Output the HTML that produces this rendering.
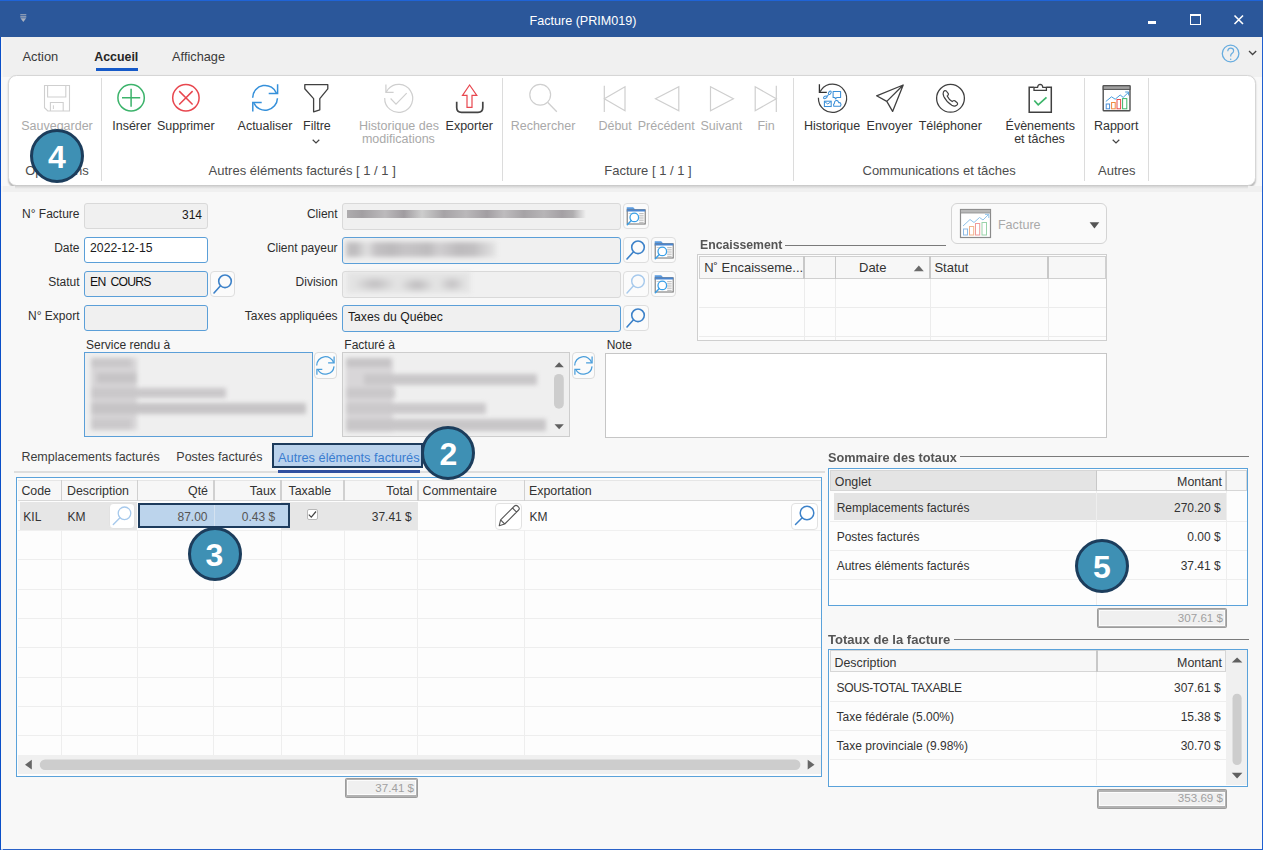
<!DOCTYPE html><html><head><meta charset="utf-8"><style>
html,body{margin:0;padding:0;width:1263px;height:850px;overflow:hidden;background:#f8f8f8;font-family:"Liberation Sans",sans-serif;}
.a{position:absolute;box-sizing:border-box;}
.t{position:absolute;white-space:nowrap;}
svg.a{overflow:visible;}
</style></head><body>
<div class="a" style="left:0px;top:0px;width:1263px;height:37px;background:#2b579a;"></div>
<div class="a" style="left:0px;top:0px;width:1263px;height:1px;background:#1f64d8;"></div>
<div class="t" style="top:14.36px;font-size:12.6px;line-height:15.75px;color:#ffffff;left:433.0px;width:300px;text-align:center;">Facture (PRIM019)</div>
<svg class="a" style="left:0px;top:0px;" width="30" height="30" viewBox="0 0 30 30"><path d="M20.3,14.8 h6 M20.3,16.9 h6" stroke="#a9b1bf" stroke-width="1.1"/><path d="M20.5,18.2 L26.1,18.2 L23.3,21.9 Z" fill="#a9b1bf"/></svg>
<div class="a" style="left:1148px;top:21px;width:8px;height:3px;background:#ffffff;"></div>
<div class="a" style="left:1190px;top:14px;width:11px;height:11px;border:1.5px solid #fff;border-top-width:2px;"></div>
<svg class="a" style="left:1230px;top:10px;" width="20" height="20" viewBox="1230 10 20 20"><path d="M1234.5,15.5 L1243,24 M1243,15.5 L1234.5,24" stroke="#fff" stroke-width="1.6"/></svg>
<div class="a" style="left:0px;top:37px;width:1263px;height:40px;background:#f0f0f0;"></div>
<div class="t" style="top:49.27px;font-size:12.9px;line-height:16.12px;color:#3a3a3a;left:22.4px;">Action</div>
<div class="t" style="top:49.73px;font-size:12.42px;line-height:15.53px;color:#262626;font-weight:bold;left:94.2px;">Accueil</div>
<div class="t" style="top:49.42px;font-size:12.74px;line-height:15.93px;color:#3a3a3a;left:172.1px;">Affichage</div>
<div class="a" style="left:95.5px;top:68px;width:42px;height:3px;background:#1559c8;"></div>
<svg class="a" style="left:1215px;top:40px;" width="48" height="30" viewBox="1215 40 48 30"><circle cx="1230.6" cy="53.5" r="8.3" fill="none" stroke="#67acdf" stroke-width="1.3"/><path d="M1227.8,51.3 q0,-3.2 2.9,-3.2 q2.9,0 2.9,2.7 q0,1.8 -1.6,2.6 q-1.3,0.7 -1.3,2.3 v0.8" fill="none" stroke="#67acdf" stroke-width="1.2"/><circle cx="1230.7" cy="59.3" r="0.75" fill="#67acdf"/><path d="M1249,51 L1252.6,54.5 L1256.2,51" fill="none" stroke="#444" stroke-width="1.3"/></svg>
<div class="a" style="left:8px;top:75px;width:1247.5px;height:110.5px;background:#fff;border:1px solid #d6d6d6;border-radius:8.5px;box-shadow:0 1.3px 1.6px rgba(0,0,0,0.26);"></div>
<div class="a" style="left:101.0px;top:78px;width:1.2px;height:103px;background:#dcdcdc;"></div>
<div class="a" style="left:502.0px;top:78px;width:1.2px;height:103px;background:#dcdcdc;"></div>
<div class="a" style="left:793.0px;top:78px;width:1.2px;height:103px;background:#dcdcdc;"></div>
<div class="a" style="left:1084.0px;top:78px;width:1.2px;height:103px;background:#dcdcdc;"></div>
<div class="a" style="left:1148.0px;top:78px;width:1.2px;height:103px;background:#dcdcdc;"></div>
<div class="t" style="top:119.46px;font-size:12.5px;line-height:15.62px;color:#a9a9a9;left:-3.0px;width:120px;text-align:center;">Sauvegarder</div>
<div class="t" style="top:119.46px;font-size:12.5px;line-height:15.62px;color:#333;left:71.69999999999999px;width:120px;text-align:center;">Insérer</div>
<div class="t" style="top:119.46px;font-size:12.5px;line-height:15.62px;color:#333;left:125.80000000000001px;width:120px;text-align:center;">Supprimer</div>
<div class="t" style="top:119.46px;font-size:12.5px;line-height:15.62px;color:#333;left:205.0px;width:120px;text-align:center;">Actualiser</div>
<div class="t" style="top:119.46px;font-size:12.5px;line-height:15.62px;color:#333;left:256.9px;width:120px;text-align:center;">Filtre</div>
<div class="t" style="top:119.46px;font-size:12.5px;line-height:15.62px;color:#a9a9a9;left:339.0px;width:120px;text-align:center;">Historique des</div>
<div class="t" style="top:132.36px;font-size:12.5px;line-height:15.62px;color:#a9a9a9;left:338.4px;width:120px;text-align:center;">modifications</div>
<div class="t" style="top:119.46px;font-size:12.5px;line-height:15.62px;color:#333;left:409.2px;width:120px;text-align:center;">Exporter</div>
<div class="t" style="top:119.46px;font-size:12.5px;line-height:15.62px;color:#a9a9a9;left:483.0px;width:120px;text-align:center;">Rechercher</div>
<div class="t" style="top:119.46px;font-size:12.5px;line-height:15.62px;color:#a9a9a9;left:555.1px;width:120px;text-align:center;">Début</div>
<div class="t" style="top:119.46px;font-size:12.5px;line-height:15.62px;color:#a9a9a9;left:606.2px;width:120px;text-align:center;">Précédent</div>
<div class="t" style="top:119.46px;font-size:12.5px;line-height:15.62px;color:#a9a9a9;left:661.3px;width:120px;text-align:center;">Suivant</div>
<div class="t" style="top:119.46px;font-size:12.5px;line-height:15.62px;color:#a9a9a9;left:706.1px;width:120px;text-align:center;">Fin</div>
<div class="t" style="top:119.46px;font-size:12.5px;line-height:15.62px;color:#333;left:772.1px;width:120px;text-align:center;">Historique</div>
<div class="t" style="top:119.46px;font-size:12.5px;line-height:15.62px;color:#333;left:829.5px;width:120px;text-align:center;">Envoyer</div>
<div class="t" style="top:119.46px;font-size:12.5px;line-height:15.62px;color:#333;left:890.3px;width:120px;text-align:center;">Téléphoner</div>
<div class="t" style="top:119.46px;font-size:12.5px;line-height:15.62px;color:#333;left:980.3px;width:120px;text-align:center;">Évènements</div>
<div class="t" style="top:132.26px;font-size:12.5px;line-height:15.62px;color:#333;left:979.5px;width:120px;text-align:center;">et tâches</div>
<div class="t" style="top:119.46px;font-size:12.5px;line-height:15.62px;color:#333;left:1056.2px;width:120px;text-align:center;">Rapport</div>
<div class="t" style="top:163.37px;font-size:13px;line-height:16.25px;color:#4d4d4d;left:-23.0px;width:160px;text-align:center;">Opérations</div>
<div class="t" style="top:163.37px;font-size:13px;line-height:16.25px;color:#4d4d4d;left:172.2px;width:260px;text-align:center;">Autres éléments facturés [ 1 / 1 ]</div>
<div class="t" style="top:163.37px;font-size:13px;line-height:16.25px;color:#4d4d4d;left:568.0px;width:160px;text-align:center;">Facture [ 1 / 1 ]</div>
<div class="t" style="top:163.37px;font-size:13px;line-height:16.25px;color:#4d4d4d;left:829.1px;width:220px;text-align:center;">Communications et tâches</div>
<div class="t" style="top:163.37px;font-size:13px;line-height:16.25px;color:#4d4d4d;left:1066.8px;width:100px;text-align:center;">Autres</div>
<svg class="a" style="left:310px;top:136px;" width="12" height="10" viewBox="310 136 12 10"><path d="M312.7,139.8 L316,143 L319.3,139.8" fill="none" stroke="#444" stroke-width="1.2"/></svg>
<svg class="a" style="left:1109.6px;top:136px;" width="12" height="10" viewBox="1109.6 136 12 10"><path d="M1112.3,139.8 L1115.6,143 L1118.8999999999999,139.8" fill="none" stroke="#444" stroke-width="1.2"/></svg>
<svg class="a" style="left:40px;top:82px;" width="34" height="34" viewBox="40 82 34 34"><path d="M44.5,85.5 H69.5 V111 H47.8 L44.5,107.7 Z" fill="none" stroke="#cfcfcf" stroke-width="1.1"/><path d="M47.6,85.5 V97 H65.8 V85.5" fill="none" stroke="#cfcfcf" stroke-width="1.1"/><path d="M50.4,111 V102.5 H63.2 V111" fill="none" stroke="#cfcfcf" stroke-width="1.1"/><path d="M53.4,105.3 V109" stroke="#cfcfcf" stroke-width="1"/></svg>
<svg class="a" style="left:112px;top:80px;" width="40" height="36" viewBox="112 80 40 36"><circle cx="131.1" cy="97.8" r="13.2" fill="none" stroke="#3cb36b" stroke-width="1.5"/><path d="M122,97.8 H140.2 M131.1,88.8 V106.8" stroke="#3cb36b" stroke-width="1.5"/></svg>
<svg class="a" style="left:168px;top:80px;" width="40" height="36" viewBox="168 80 40 36"><circle cx="185.9" cy="97.8" r="13.2" fill="none" stroke="#e8474f" stroke-width="1.5"/><path d="M179.2,91.1 L192.6,104.5 M192.6,91.1 L179.2,104.5" stroke="#e8474f" stroke-width="1.5"/></svg>
<svg class="a" style="left:248px;top:80px;" width="36" height="36" viewBox="248 80 36 36"><path d="M252.67,97.80 A12.4,12.4 0 0 1 276.79,93.76" fill="none" stroke="#3590da" stroke-width="1.5"/><path d="M277.6,84.3 V93.4 H268.7" fill="none" stroke="#3590da" stroke-width="1.5"/><path d="M277.46,98.23 A12.4,12.4 0 0 1 253.83,103.04" fill="none" stroke="#3590da" stroke-width="1.5"/><path d="M252.8,111.4 V102.5 H261.7" fill="none" stroke="#3590da" stroke-width="1.5"/></svg>
<svg class="a" style="left:300px;top:80px;" width="34" height="36" viewBox="300 80 34 36"><path d="M304.8,84.7 H327.8 V88.8 L319.8,98.6 V109.8 L313.6,111.8 V98.6 L304.8,88.8 Z" fill="none" stroke="#404040" stroke-width="1.3" stroke-linejoin="round"/></svg>
<svg class="a" style="left:380px;top:80px;" width="36" height="36" viewBox="380 80 36 36"><path d="M387.98,89.40 A14.0,14.0 0 1 1 384.71,97.91" fill="none" stroke="#cfcfcf" stroke-width="1.2"/><path d="M385.9,84.6 V92.3 H393.6" fill="none" stroke="#cfcfcf" stroke-width="1.25"/><path d="M386.1,92.1 L387.98,89.40" stroke="#cfcfcf" stroke-width="1.2"/><path d="M390.6,98.5 L396,104.1 L406.7,93.2" fill="none" stroke="#cfcfcf" stroke-width="1.2"/></svg>
<svg class="a" style="left:452px;top:80px;" width="36" height="36" viewBox="452 80 36 36"><path d="M469.6,85 L476.8,95.4 H472 V107.4 H467 V95.4 H462.5 Z" fill="none" stroke="#e8474f" stroke-width="1.2" stroke-linejoin="miter"/><path d="M456.7,101.7 V107.5 Q456.7,112.3 461.5,112.3 H478 Q482.8,112.3 482.8,107.5 V101.7" fill="none" stroke="#444" stroke-width="1.7"/></svg>
<svg class="a" style="left:525px;top:80px;" width="36" height="36" viewBox="525 80 36 36"><circle cx="540.2" cy="94.8" r="10.4" fill="none" stroke="#cfcfcf" stroke-width="1.2"/><path d="M547.6,102.3 L556.8,111.8" stroke="#cfcfcf" stroke-width="1.3"/></svg>
<svg class="a" style="left:600px;top:82px;" width="180" height="32" viewBox="600 82 180 32"><path d="M604.3,85.7 V111.9 M625,86.8 V110.8 L604.3,98.8 Z" fill="none" stroke="#cfcfcf" stroke-width="1.2"/><path d="M678.8,86.8 V110.8 L655.5,98.8 Z" fill="none" stroke="#cfcfcf" stroke-width="1.2"/><path d="M710.5,86.8 V110.8 L733.4,98.8 Z" fill="none" stroke="#cfcfcf" stroke-width="1.2"/><path d="M776.3,85.7 V111.9 M755.2,86.8 V110.8 L776.3,98.8 Z" fill="none" stroke="#cfcfcf" stroke-width="1.2"/></svg>
<svg class="a" style="left:812px;top:80px;" width="40" height="36" viewBox="812 80 40 36"><path d="M821.24,89.81 A14.1,14.1 0 1 1 818.41,97.81" fill="none" stroke="#404040" stroke-width="1.25"/><path d="M819.4,84.3 V92.3 H826.8" fill="none" stroke="#303030" stroke-width="1.3"/><path d="M819.6,92.1 L821.6,89.6" stroke="#404040" stroke-width="1.2"/><path d="M833.1,91.4 H840.6 V97.4 H837 L835.4,99 L835,97.4 H833.1 Z" fill="none" stroke="#3a8fd8" stroke-width="1.05" stroke-linejoin="round"/><ellipse cx="825.3" cy="97.3" rx="1.9" ry="1.1" transform="rotate(-25 825.3 97.3)" fill="none" stroke="#3a8fd8" stroke-width="1.05"/><path d="M827,96.5 L828.6,94.5" stroke="#3a8fd8" stroke-width="1.05"/><ellipse cx="829.8" cy="92.8" rx="1.1" ry="1.9" transform="rotate(35 829.8 92.8)" fill="none" stroke="#3a8fd8" stroke-width="1.05"/><rect x="824.4" y="101.2" width="6.8" height="5.3" fill="none" stroke="#3a8fd8" stroke-width="1.05"/><path d="M824.6,101.6 L827.8,104 L831,101.6" fill="none" stroke="#3a8fd8" stroke-width="0.95"/><path d="M833.8,106.2 H840.4 Q841.6,104.6 840.5,103 Q839.6,102.5 838.8,102.7 Q838,100 836,100.4 Q834.3,101 834.4,103.3 Q833,104.2 833.8,106.2 Z" fill="none" stroke="#3a8fd8" stroke-width="1.05"/></svg>
<svg class="a" style="left:872px;top:80px;" width="36" height="36" viewBox="872 80 36 36"><path d="M903.2,85 L876.6,95.8 L886.8,101.4 L892.6,111.4 Z M886.8,101.4 L903.2,85" fill="none" stroke="#404040" stroke-width="1.3" stroke-linejoin="round"/></svg>
<svg class="a" style="left:932px;top:80px;" width="38" height="36" viewBox="932 80 38 36"><circle cx="950.5" cy="98.3" r="13.9" fill="none" stroke="#404040" stroke-width="1.3"/><path d="M943.5,91.8 Q944.8,89.8 946.3,91 L948.3,93.6 Q948.8,94.6 947.8,95.5 L947.2,96 Q948.8,99.5 952.2,101.6 L953,100.9 Q953.9,100.2 954.8,100.8 L957.2,102.8 Q958.2,104 956.6,105.3 Q954.6,106.8 951.8,105.2 Q946.5,102 943.8,96.5 Q942.6,93.6 943.5,91.8 Z" fill="none" stroke="#404040" stroke-width="1.2" stroke-linejoin="round"/></svg>
<svg class="a" style="left:1025px;top:80px;" width="32" height="36" viewBox="1025 80 32 36"><path d="M1033.8,87.3 H1029.2 V112.2 H1051.3 V87.3 H1046.5" fill="none" stroke="#404040" stroke-width="1.5"/><path d="M1034,87.3 V90.4 H1046.4 V87.3 H1042.8 Q1042.5,84.5 1040.2,84.4 Q1037.9,84.5 1037.6,87.3 Z" fill="none" stroke="#404040" stroke-width="1.3"/><path d="M1034.3,100.5 L1038.2,104.9 L1046.5,97.3" fill="none" stroke="#3cb56a" stroke-width="1.7"/></svg>
<svg class="a" style="left:1100px;top:82px;" width="34" height="32" viewBox="1100 82 34 32"><rect x="1103.2" y="85.8" width="26.8" height="25" rx="0.8" fill="#fff" stroke="#505050" stroke-width="1.4"/><rect x="1103.2" y="85.8" width="26.8" height="3.6" fill="#a0a0a0" stroke="#505050" stroke-width="1"/><rect x="1106.2" y="104" width="3.4" height="4.8" fill="none" stroke="#4a90d9" stroke-width="1"/><rect x="1111.6" y="102.5" width="3.6" height="6.3" fill="none" stroke="#f08a3c" stroke-width="1"/><rect x="1117" y="99.5" width="3.6" height="9.3" fill="none" stroke="#e84a4a" stroke-width="1"/><rect x="1122.6" y="98.6" width="4.2" height="10.2" fill="none" stroke="#3cb56a" stroke-width="1"/><path d="M1105.8,101.5 L1111.5,96.8 L1115.2,99.2 L1120.2,95 L1123.2,97.4 L1128.3,92.5" fill="none" stroke="#4a9ddc" stroke-width="1"/><path d="M1125.2,92 H1128.6 V95.4" fill="none" stroke="#4a9ddc" stroke-width="1"/></svg>
<div class="t" style="top:207.14px;font-size:12px;line-height:15.0px;color:#2e2e2e;left:-20.5px;width:100px;text-align:right;">N° Facture</div>
<div class="t" style="top:241.14px;font-size:12px;line-height:15.0px;color:#2e2e2e;left:-20.5px;width:100px;text-align:right;">Date</div>
<div class="t" style="top:275.14px;font-size:12px;line-height:15.0px;color:#2e2e2e;left:-20.5px;width:100px;text-align:right;">Statut</div>
<div class="t" style="top:309.14px;font-size:12px;line-height:15.0px;color:#2e2e2e;left:-20.5px;width:100px;text-align:right;">N° Export</div>
<div class="a" style="left:84.4px;top:203.3px;width:123.5px;height:26px;background:#f0f0f0;border:1px solid #d9d9d9;border-radius:3px;"></div>
<div class="a" style="left:84.4px;top:237.3px;width:123.5px;height:26px;background:#ffffff;border:1.5px solid #5b9fd8;border-radius:3px;"></div>
<div class="a" style="left:84.4px;top:271.3px;width:123.5px;height:26px;background:#f0f0f0;border:1.5px solid #5b9fd8;border-radius:3px;"></div>
<div class="a" style="left:84.4px;top:305.3px;width:123.5px;height:26px;background:#f0f0f0;border:1.5px solid #5b9fd8;border-radius:3px;"></div>
<div class="t" style="top:207.54px;font-size:12px;line-height:15.0px;color:#1a1a1a;left:142px;width:60px;text-align:right;">314</div>
<div class="t" style="top:241.35px;font-size:12.2px;line-height:15.25px;color:#1a1a1a;left:90.1px;">2022-12-15</div>
<div class="t" style="top:275.35px;font-size:12.2px;line-height:15.25px;color:#111;letter-spacing:-0.8px;left:90.1px;word-spacing:2.5px;">EN COURS</div>
<div class="a" style="left:209.5px;top:271.3px;width:25.5px;height:26px;background:#fbfbfb;border:1px solid #dedede;border-radius:4px;"></div>
<svg class="a" style="left:209.5px;top:271.3px;" width="26" height="26" viewBox="209.5 271.3 26 26"><circle cx="224.5" cy="281.6" r="6.3" fill="none" stroke="#3d82c9" stroke-width="1.6"/><path d="M220.0,286.1 L213.5,293.3" stroke="#3d82c9" stroke-width="1.6" stroke-linecap="round"/></svg>
<div class="t" style="top:207.14px;font-size:12px;line-height:15.0px;color:#2e2e2e;left:197.60000000000002px;width:140px;text-align:right;">Client</div>
<div class="t" style="top:241.14px;font-size:12px;line-height:15.0px;color:#2e2e2e;left:197.60000000000002px;width:140px;text-align:right;">Client payeur</div>
<div class="t" style="top:275.14px;font-size:12px;line-height:15.0px;color:#2e2e2e;left:197.60000000000002px;width:140px;text-align:right;">Division</div>
<div class="t" style="top:309.14px;font-size:12px;line-height:15.0px;color:#2e2e2e;left:197.60000000000002px;width:140px;text-align:right;">Taxes appliquées</div>
<div class="a" style="left:342.3px;top:203.3px;width:279px;height:26.3px;background:#f0f0f0;border:1px solid #d9d9d9;border-radius:3px;"></div>
<div class="a" style="left:342.3px;top:237.3px;width:279px;height:26.3px;background:#f0f0f0;border:1.5px solid #5b9fd8;border-radius:3px;"></div>
<div class="a" style="left:342.3px;top:271.3px;width:279px;height:26.3px;background:#f0f0f0;border:1px solid #d9d9d9;border-radius:3px;"></div>
<div class="a" style="left:342.3px;top:305.3px;width:279px;height:26.3px;background:#f0f0f0;border:1.5px solid #5b9fd8;border-radius:3px;"></div>
<div class="a" style="left:346.7px;top:210.1px;width:240px;height:8.4px;filter:blur(0.6px);background:linear-gradient(90deg,#aeacae 0px,#a29fa2 15px,#bcbabc 38px,#a09ca0 57px,#cdcdcd 75px,#a6a3a6 97px,#bab8ba 119px,#a29ea2 140px,#bebcbe 157px,#a6a3a6 177px,#b7b5b7 197px,#a4a0a4 215px,#b0aeb0 226px,#f0f0f0 239px);"></div>
<div class="a" style="left:346px;top:242px;width:150px;height:15px;filter:blur(2.5px);background:linear-gradient(90deg,#c4c2c4 0%,#bdbbbd 6%,#e0e0e0 14%,#c3c1c3 20%,#bcbabc 30%,#c6c4c6 40%,#bebcbe 55%,#d0ced0 62%,#bdbbbd 75%,#c1bfc1 85%,#e4e4e4 100%);"></div>
<div class="a" style="left:347px;top:272px;width:123px;height:21px;filter:blur(2.5px);background:radial-gradient(ellipse 22px 8px at 28px 12px,#bdbbbd,transparent),radial-gradient(ellipse 18px 8px at 70px 13px,#bab8ba,transparent),radial-gradient(ellipse 14px 8px at 105px 12px,#c0bec0,transparent),#e3e3e3;"></div>
<div class="t" style="top:309.55px;font-size:12.2px;line-height:15.25px;color:#1a1a1a;left:348px;">Taxes du Québec</div>
<div class="a" style="left:623.3px;top:203.3px;width:25.5px;height:26px;background:#fbfbfb;border:1px solid #dedede;border-radius:4px;"></div>
<svg class="a" style="left:623.3px;top:203.3px;" width="26" height="26" viewBox="623.3 203.3 26 26"><path d="M627.0,207.60000000000002 h6.5 l2,2.2 h9.6 v2.3 h-18.1 Z" fill="#5a9be0"/><rect x="627.5" y="210.10000000000002" width="18" height="14.2" fill="#fff" stroke="#6e6e6e" stroke-width="1"/><rect x="627.5" y="209.8" width="18" height="2" fill="#4a86d0"/><path d="M639.5,213.8 h4.5" stroke="#b0b0b0" stroke-width="0.8"/><path d="M639.5,215.60000000000002 h4.5" stroke="#b0b0b0" stroke-width="0.8"/><path d="M639.5,217.4 h4.5" stroke="#b0b0b0" stroke-width="0.8"/><path d="M639.5,219.20000000000002 h4.5" stroke="#b0b0b0" stroke-width="0.8"/><path d="M639.5,221.0 h4.5" stroke="#b0b0b0" stroke-width="0.8"/><path d="M639.5,222.8 h4.5" stroke="#b0b0b0" stroke-width="0.8"/><path d="M629.0,213.8 h8" stroke="#c0c0c0" stroke-width="0.8"/><circle cx="634.6" cy="217.70000000000002" r="4.3" fill="#fff" fill-opacity="0.6" stroke="#3aa0e8" stroke-width="1.3"/><path d="M631.6,220.8 L627.6,225.10000000000002" stroke="#3aa0e8" stroke-width="1.4" stroke-linecap="round"/></svg>
<div class="a" style="left:623.3px;top:237.3px;width:25.5px;height:26px;background:#fbfbfb;border:1px solid #dedede;border-radius:4px;"></div>
<svg class="a" style="left:623.3px;top:237.3px;" width="26" height="26" viewBox="623.3 237.3 26 26"><circle cx="638.3" cy="247.60000000000002" r="6.3" fill="none" stroke="#3d82c9" stroke-width="1.6"/><path d="M633.8,252.10000000000002 L627.3,259.3" stroke="#3d82c9" stroke-width="1.6" stroke-linecap="round"/></svg>
<div class="a" style="left:650.8px;top:237.3px;width:25.5px;height:26px;background:#fbfbfb;border:1px solid #dedede;border-radius:4px;"></div>
<svg class="a" style="left:650.8px;top:237.3px;" width="26" height="26" viewBox="650.8 237.3 26 26"><path d="M654.5,241.60000000000002 h6.5 l2,2.2 h9.6 v2.3 h-18.1 Z" fill="#5a9be0"/><rect x="655.0" y="244.10000000000002" width="18" height="14.2" fill="#fff" stroke="#6e6e6e" stroke-width="1"/><rect x="655.0" y="243.8" width="18" height="2" fill="#4a86d0"/><path d="M667.0,247.8 h4.5" stroke="#b0b0b0" stroke-width="0.8"/><path d="M667.0,249.60000000000002 h4.5" stroke="#b0b0b0" stroke-width="0.8"/><path d="M667.0,251.4 h4.5" stroke="#b0b0b0" stroke-width="0.8"/><path d="M667.0,253.20000000000002 h4.5" stroke="#b0b0b0" stroke-width="0.8"/><path d="M667.0,255.0 h4.5" stroke="#b0b0b0" stroke-width="0.8"/><path d="M667.0,256.8 h4.5" stroke="#b0b0b0" stroke-width="0.8"/><path d="M656.5,247.8 h8" stroke="#c0c0c0" stroke-width="0.8"/><circle cx="662.1" cy="251.70000000000002" r="4.3" fill="#fff" fill-opacity="0.6" stroke="#3aa0e8" stroke-width="1.3"/><path d="M659.1,254.8 L655.1,259.1" stroke="#3aa0e8" stroke-width="1.4" stroke-linecap="round"/></svg>
<div class="a" style="left:623.3px;top:271.3px;width:25.5px;height:26px;background:#fbfbfb;border:1px solid #dedede;border-radius:4px;"></div>
<svg class="a" style="left:623.3px;top:271.3px;" width="26" height="26" viewBox="623.3 271.3 26 26"><circle cx="638.3" cy="281.6" r="6.3" fill="none" stroke="#a6c9ec" stroke-width="1.4"/><path d="M633.8,286.1 L627.3,293.3" stroke="#a6c9ec" stroke-width="1.4" stroke-linecap="round"/></svg>
<div class="a" style="left:650.8px;top:271.3px;width:25.5px;height:26px;background:#fbfbfb;border:1px solid #dedede;border-radius:4px;"></div>
<svg class="a" style="left:650.8px;top:271.3px;" width="26" height="26" viewBox="650.8 271.3 26 26"><path d="M654.5,275.6 h6.5 l2,2.2 h9.6 v2.3 h-18.1 Z" fill="#5a9be0"/><rect x="655.0" y="278.1" width="18" height="14.2" fill="#fff" stroke="#6e6e6e" stroke-width="1"/><rect x="655.0" y="277.8" width="18" height="2" fill="#4a86d0"/><path d="M667.0,281.8 h4.5" stroke="#b0b0b0" stroke-width="0.8"/><path d="M667.0,283.6 h4.5" stroke="#b0b0b0" stroke-width="0.8"/><path d="M667.0,285.40000000000003 h4.5" stroke="#b0b0b0" stroke-width="0.8"/><path d="M667.0,287.2 h4.5" stroke="#b0b0b0" stroke-width="0.8"/><path d="M667.0,289.0 h4.5" stroke="#b0b0b0" stroke-width="0.8"/><path d="M667.0,290.8 h4.5" stroke="#b0b0b0" stroke-width="0.8"/><path d="M656.5,281.8 h8" stroke="#c0c0c0" stroke-width="0.8"/><circle cx="662.1" cy="285.7" r="4.3" fill="#fff" fill-opacity="0.6" stroke="#3aa0e8" stroke-width="1.3"/><path d="M659.1,288.8 L655.1,293.1" stroke="#3aa0e8" stroke-width="1.4" stroke-linecap="round"/></svg>
<div class="a" style="left:623.3px;top:305.3px;width:25.5px;height:26px;background:#fbfbfb;border:1px solid #dedede;border-radius:4px;"></div>
<svg class="a" style="left:623.3px;top:305.3px;" width="26" height="26" viewBox="623.3 305.3 26 26"><circle cx="638.3" cy="315.6" r="6.3" fill="none" stroke="#3d82c9" stroke-width="1.6"/><path d="M633.8,320.1 L627.3,327.3" stroke="#3d82c9" stroke-width="1.6" stroke-linecap="round"/></svg>
<div class="a" style="left:950.6px;top:202.9px;width:156.2px;height:41.5px;background:#fafafa;border:1px solid #d4d4d4;border-radius:6px;"></div>
<svg class="a" style="left:958px;top:207px;" width="36" height="34" viewBox="958 207 36 34"><rect x="960.5" y="209.5" width="30" height="28" fill="#fff" stroke="#8a8a8a" stroke-width="1.2"/><rect x="960.5" y="209.5" width="30" height="3.5" fill="#b9b9b9" stroke="#8a8a8a" stroke-width="0.8"/><rect x="963.5" y="229" width="4" height="6" fill="none" stroke="#8fbbe6" stroke-width="1"/><rect x="969.5" y="226.5" width="4.2" height="8.5" fill="none" stroke="#f4b38a" stroke-width="1"/><rect x="975.5" y="223.5" width="4.2" height="11.5" fill="none" stroke="#ef9a9a" stroke-width="1"/><rect x="982" y="222.5" width="4.5" height="12.5" fill="none" stroke="#9ad3aa" stroke-width="1"/><path d="M963,226 L970,219.5 L974,222.5 L979.5,217.5 L983,220 L988.5,214.5" fill="none" stroke="#8fc2ea" stroke-width="1"/><path d="M985,214.3 H988.8 V218" fill="none" stroke="#8fc2ea" stroke-width="1"/></svg>
<div class="t" style="top:217.96px;font-size:12.6px;line-height:15.75px;color:#a9a9a9;left:997.9px;">Facture</div>
<svg class="a" style="left:1086px;top:218px;" width="16" height="14" viewBox="1086 218 16 14"><path d="M1089.6,222.3 H1099.3 L1094.45,228.5 Z" fill="#555"/></svg>
<div class="t" style="top:238.44px;font-size:12px;line-height:15.0px;color:#555;font-weight:bold;left:699.5px;transform:scaleX(1.02);transform-origin:0 0;">Encaissement</div>
<div class="a" style="left:785px;top:244.6px;width:160.5px;height:1.2px;background:#7a7a7a;"></div>
<div class="a" style="left:697.3px;top:254.2px;width:409.5px;height:86.5px;background:#fdfdfd;border:1px solid #cfcfcf;"></div>
<div class="a" style="left:699px;top:256.3px;width:407px;height:22.5px;background:#f7f7f7;border:1px solid #d0d0d0;"></div>
<div class="a" style="left:803.1999999999999px;top:256.3px;width:1.6px;height:22.5px;background:#c8c8c8;"></div>
<div class="a" style="left:834.6px;top:256.3px;width:1.6px;height:22.5px;background:#c8c8c8;"></div>
<div class="a" style="left:929.0px;top:256.3px;width:1.6px;height:22.5px;background:#c8c8c8;"></div>
<div class="a" style="left:1047.0px;top:256.3px;width:1.6px;height:22.5px;background:#c8c8c8;"></div>
<div class="a" style="left:804.0px;top:278.8px;width:1px;height:61px;background:#ececec;"></div>
<div class="a" style="left:835.2px;top:278.8px;width:1px;height:61px;background:#ececec;"></div>
<div class="a" style="left:929.8px;top:278.8px;width:1px;height:61px;background:#ececec;"></div>
<div class="a" style="left:1047.7px;top:278.8px;width:1px;height:61px;background:#ececec;"></div>
<div class="a" style="left:698.5px;top:306.9px;width:407px;height:1px;background:#ececec;"></div>
<div class="a" style="left:698.5px;top:336.0px;width:407px;height:1px;background:#ececec;"></div>
<div class="t" style="top:260.27px;font-size:13px;line-height:16.25px;color:#333;left:704.2px;">N˚ Encaisseme...</div>
<div class="t" style="top:260.27px;font-size:13px;line-height:16.25px;color:#333;left:859px;">Date</div>
<div class="t" style="top:260.27px;font-size:13px;line-height:16.25px;color:#333;left:934.4px;">Statut</div>
<svg class="a" style="left:910px;top:262px;" width="16" height="12" viewBox="910 262 16 12"><path d="M913.8,271.2 H923.8 L918.8,265.5 Z" fill="#6a6a6a"/></svg>
<div class="t" style="top:338.34px;font-size:12px;line-height:15.0px;color:#2e2e2e;left:86.1px;">Service rendu à</div>
<div class="t" style="top:338.34px;font-size:12px;line-height:15.0px;color:#2e2e2e;left:344.3px;">Facturé à</div>
<div class="t" style="top:338.34px;font-size:12px;line-height:15.0px;color:#2e2e2e;left:606.7px;">Note</div>
<div class="a" style="left:84.2px;top:352.4px;width:228.4px;height:84.5px;background:#efefef;border:1.5px solid #5b9fd8;"></div>
<div class="a" style="left:342.3px;top:352.2px;width:228.2px;height:84.9px;background:#efefef;border:1px solid #cdcdcd;"></div>
<div class="a" style="left:605px;top:352.5px;width:502px;height:85.1px;background:#ffffff;border:1.5px solid #c6c6c6;"></div>
<div class="a" style="left:84px;top:352px;width:240px;height:90px;filter:blur(2.2px);"><div class="a" style="left:7px;top:6px;width:46px;height:72px;background:#d6d4d6;"></div><div class="a" style="left:7px;top:6px;width:40px;height:9px;background:#c9c7c9;"></div><div class="a" style="left:13px;top:21px;width:40px;height:10px;background:#c6c4c6;"></div><div class="a" style="left:7px;top:36px;width:135px;height:10px;background:#cac8ca;"></div><div class="a" style="left:7px;top:51px;width:215px;height:11px;background:#c6c4c6;"></div><div class="a" style="left:7px;top:67px;width:40px;height:11px;background:#cbc9cb;"></div></div>
<div class="a" style="left:342px;top:352px;width:240px;height:90px;filter:blur(2.2px);"><div class="a" style="left:4px;top:6px;width:47px;height:74px;background:#d8d6d8;"></div><div class="a" style="left:4px;top:6px;width:45px;height:9px;background:#c6c4c6;"></div><div class="a" style="left:22px;top:22px;width:173px;height:11px;background:#c9c7c9;"></div><div class="a" style="left:4px;top:36px;width:49px;height:10px;background:#cac8ca;"></div><div class="a" style="left:4px;top:51px;width:140px;height:11px;background:#cbc9cb;"></div><div class="a" style="left:4px;top:67px;width:200px;height:12px;background:#c8c6c8;"></div></div>
<svg class="a" style="left:550px;top:356px;" width="20" height="80" viewBox="550 356 20 80"><path d="M554.5,367.3 H563.8 L559.15,362.2 Z" fill="#606060"/><path d="M554.5,424.2 H563.8 L559.15,429.3 Z" fill="#606060"/><rect x="554" y="373.9" width="9.8" height="34.8" rx="4.9" fill="#cdcdcd"/></svg>
<div class="a" style="left:314.3px;top:352.4px;width:22.8px;height:26.2px;background:#fbfbfb;border:1.2px solid #dcdcdc;border-radius:4px;"></div>
<svg class="a" style="left:314.3px;top:352.4px;" width="24" height="26" viewBox="314.3 352.4 24 26"><path d="M317.00,365.80 A8.7,8.7 0 0 1 334.02,363.26" fill="none" stroke="#4a9edb" stroke-width="1.25"/><path d="M334.40,356.90 V363.20 H328.40" fill="none" stroke="#4a9edb" stroke-width="1.25"/><path d="M334.35,366.71 A8.7,8.7 0 0 1 318.17,370.15" fill="none" stroke="#4a9edb" stroke-width="1.25"/><path d="M317.20,375.20 V369.70 H322.60" fill="none" stroke="#4a9edb" stroke-width="1.25"/></svg>
<div class="a" style="left:572.3px;top:352.4px;width:22.8px;height:26.2px;background:#fbfbfb;border:1.2px solid #dcdcdc;border-radius:4px;"></div>
<svg class="a" style="left:572.3px;top:352.4px;" width="24" height="26" viewBox="572.3 352.4 24 26"><path d="M575.00,365.80 A8.7,8.7 0 0 1 592.02,363.26" fill="none" stroke="#4a9edb" stroke-width="1.25"/><path d="M592.40,356.90 V363.20 H586.40" fill="none" stroke="#4a9edb" stroke-width="1.25"/><path d="M592.35,366.71 A8.7,8.7 0 0 1 576.17,370.15" fill="none" stroke="#4a9edb" stroke-width="1.25"/><path d="M575.20,375.20 V369.70 H580.60" fill="none" stroke="#4a9edb" stroke-width="1.25"/></svg>
<div class="a" style="left:0px;top:186px;width:1263px;height:6px;background:#f0f0f0;"></div>
<div class="a" style="left:15px;top:185.2px;width:1233px;height:3.6px;background:linear-gradient(#c4c4c4,#dcdcdc 45%,#f0f0f0);"></div>
<div class="t" style="top:450.26px;font-size:12.5px;line-height:15.62px;color:#3c3c3c;left:21.4px;">Remplacements facturés</div>
<div class="t" style="top:450.26px;font-size:12.5px;line-height:15.62px;color:#3c3c3c;left:176.3px;">Postes facturés</div>
<div class="a" style="left:13.5px;top:471px;width:811px;height:2px;background:#dedede;"></div>
<div class="a" style="left:272.4px;top:442.5px;width:150.5px;height:25px;background:#bad2ec;border:2px solid #1d3b5c;"></div>
<div class="t" style="top:449.96px;font-size:12.8px;line-height:16.0px;color:#3a7dd0;left:278px;">Autres éléments facturés</div>
<div class="a" style="left:278px;top:470.2px;width:142px;height:3px;background:#2f4fa0;"></div>
<div class="a" style="left:16.2px;top:477.2px;width:805.8px;height:299.6px;background:#fdfdfd;border:1.5px solid #5aa2da;"></div>
<div class="a" style="left:18px;top:479.5px;width:803px;height:21.8px;background:#f7f7f7;border-bottom:1px solid #d8d8d8;border-top:1px solid #e6e6e6;"></div>
<div class="a" style="left:60.900000000000006px;top:479.5px;width:1.6px;height:21.8px;background:#d0d0d0;"></div>
<div class="a" style="left:136.6px;top:479.5px;width:1.6px;height:21.8px;background:#d0d0d0;"></div>
<div class="a" style="left:213.1px;top:479.5px;width:1.6px;height:21.8px;background:#d0d0d0;"></div>
<div class="a" style="left:280.2px;top:479.5px;width:1.6px;height:21.8px;background:#d0d0d0;"></div>
<div class="a" style="left:343.4px;top:479.5px;width:1.6px;height:21.8px;background:#d0d0d0;"></div>
<div class="a" style="left:417.09999999999997px;top:479.5px;width:1.6px;height:21.8px;background:#d0d0d0;"></div>
<div class="a" style="left:523.6px;top:479.5px;width:1.6px;height:21.8px;background:#d0d0d0;"></div>
<div class="t" style="top:484.05px;font-size:12.4px;line-height:15.5px;color:#333;left:21.4px;">Code</div>
<div class="t" style="top:484.05px;font-size:12.4px;line-height:15.5px;color:#333;left:67px;">Description</div>
<div class="t" style="top:484.05px;font-size:12.4px;line-height:15.5px;color:#333;left:148px;width:60px;text-align:right;">Qté</div>
<div class="t" style="top:484.05px;font-size:12.4px;line-height:15.5px;color:#333;left:216px;width:60px;text-align:right;">Taux</div>
<div class="t" style="top:484.05px;font-size:12.4px;line-height:15.5px;color:#333;left:288.5px;">Taxable</div>
<div class="t" style="top:484.05px;font-size:12.4px;line-height:15.5px;color:#333;left:352.5px;width:60px;text-align:right;">Total</div>
<div class="t" style="top:484.05px;font-size:12.4px;line-height:15.5px;color:#333;left:422.5px;">Commentaire</div>
<div class="t" style="top:484.05px;font-size:12.4px;line-height:15.5px;color:#333;left:529px;">Exportation</div>
<div class="a" style="left:20.3px;top:501.8px;width:117.2px;height:28px;background:#e6e6e6;"></div>
<div class="a" style="left:281px;top:501.8px;width:137px;height:28px;background:#e6e6e6;"></div>
<div class="a" style="left:137.9px;top:502.6px;width:151.8px;height:25.2px;background:#bcd4ec;border:2.5px solid #1d3b5c;"></div>
<div class="a" style="left:213.6px;top:504.5px;width:1px;height:21px;background:#d4e2f0;"></div>
<div class="a" style="left:18px;top:558.8px;width:803px;height:1px;background:#eeeeee;"></div>
<div class="a" style="left:18px;top:588.6px;width:803px;height:1px;background:#eeeeee;"></div>
<div class="a" style="left:18px;top:617.9px;width:803px;height:1px;background:#eeeeee;"></div>
<div class="a" style="left:18px;top:646.9px;width:803px;height:1px;background:#eeeeee;"></div>
<div class="a" style="left:18px;top:676.5px;width:803px;height:1px;background:#eeeeee;"></div>
<div class="a" style="left:18px;top:705.7px;width:803px;height:1px;background:#eeeeee;"></div>
<div class="a" style="left:18px;top:735.0px;width:803px;height:1px;background:#eeeeee;"></div>
<div class="a" style="left:18px;top:529.5px;width:803px;height:1px;background:#f0f0f0;"></div>
<div class="a" style="left:61.2px;top:530px;width:1px;height:225px;background:#eeeeee;"></div>
<div class="a" style="left:136.9px;top:530px;width:1px;height:225px;background:#eeeeee;"></div>
<div class="a" style="left:213.4px;top:530px;width:1px;height:225px;background:#eeeeee;"></div>
<div class="a" style="left:280.5px;top:530px;width:1px;height:225px;background:#eeeeee;"></div>
<div class="a" style="left:343.7px;top:530px;width:1px;height:225px;background:#eeeeee;"></div>
<div class="a" style="left:417.4px;top:530px;width:1px;height:225px;background:#eeeeee;"></div>
<div class="a" style="left:523.9px;top:530px;width:1px;height:225px;background:#eeeeee;"></div>
<div class="t" style="top:509.54px;font-size:12px;line-height:15.0px;color:#333;left:23.3px;">KIL</div>
<div class="t" style="top:509.54px;font-size:12px;line-height:15.0px;color:#333;left:67.4px;">KM</div>
<div class="t" style="top:509.54px;font-size:12px;line-height:15.0px;color:#555;left:147.5px;width:60px;text-align:right;">87.00</div>
<div class="t" style="top:509.54px;font-size:12px;line-height:15.0px;color:#555;left:215.2px;width:60px;text-align:right;">0.43 $</div>
<div class="t" style="top:509.54px;font-size:12px;line-height:15.0px;color:#333;left:351.8px;width:60px;text-align:right;">37.41 $</div>
<div class="t" style="top:509.54px;font-size:12px;line-height:15.0px;color:#333;left:529.5px;">KM</div>
<div class="a" style="left:109.2px;top:503px;width:26px;height:26.4px;background:#fff;border:1px solid #e2e2e2;border-radius:4px;"></div>
<svg class="a" style="left:109px;top:503px;" width="27" height="27" viewBox="109 503 27 27"><circle cx="124.5" cy="513.3" r="6.3" fill="none" stroke="#a6c9ec" stroke-width="1.3"/><path d="M120,517.8 L113.3,524.5" stroke="#a6c9ec" stroke-width="1.4" stroke-linecap="round"/></svg>
<div class="a" style="left:306.5px;top:509px;width:11.8px;height:11.2px;background:#fff;border:1px solid #b8b8b8;border-radius:2px;"></div>
<svg class="a" style="left:306px;top:508px;" width="14" height="14" viewBox="306 508 14 14"><path d="M308.8,514.6 L311.3,517.2 L316,511.5" fill="none" stroke="#444" stroke-width="1.2"/></svg>
<div class="a" style="left:495px;top:503px;width:27px;height:27px;background:#fff;border:1px solid #e2e2e2;border-radius:4px;"></div>
<svg class="a" style="left:495px;top:503px;" width="27" height="27" viewBox="495 503 27 27"><path d="M499.2,525.8 L500.6,519.8 L514.5,506 Q516,504.6 517.5,506 L518.6,507.1 Q520,508.6 518.6,510 L504.7,524 Z M500.6,519.8 L504.7,524 M512.5,508 L516.6,512.1" fill="none" stroke="#555" stroke-width="1.1" stroke-linejoin="round"/></svg>
<div class="a" style="left:790.5px;top:503px;width:27.5px;height:26.5px;background:#fff;border:1px solid #e2e2e2;border-radius:4px;"></div>
<svg class="a" style="left:790px;top:503px;" width="28" height="27" viewBox="790 503 28 27"><circle cx="807" cy="513" r="6.8" fill="none" stroke="#3d82c9" stroke-width="1.5"/><path d="M802.2,517.8 L795.5,524.5" stroke="#3d82c9" stroke-width="1.5" stroke-linecap="round"/></svg>
<div class="a" style="left:18px;top:754.9px;width:803px;height:19.2px;background:#f0f0f0;"></div>
<svg class="a" style="left:20px;top:755px;" width="800" height="20" viewBox="20 755 800 20"><path d="M25,764.7 L31.8,759.8 V769.6 Z" fill="#666"/><path d="M814.5,764.7 L807.7,759.8 V769.6 Z" fill="#666"/><rect x="39.8" y="759.4" width="760.6" height="10.6" rx="5.3" fill="#cdcdcd"/></svg>
<div class="a" style="left:345px;top:777.5px;width:73px;height:20px;background:#b2b2b2;border:1px solid #9c9c9c;border-radius:1.5px;"></div>
<div class="a" style="left:347px;top:780.3px;width:69px;height:14.6px;background:#f0f0f0;border:1px solid #fcfcfc;"></div>
<div class="t" style="top:780.93px;font-size:11.6px;line-height:14.5px;color:#a0a0a0;left:334px;width:80px;text-align:right;">37.41 $</div>
<div class="t" style="top:451.04px;font-size:12px;line-height:15.0px;color:#555;font-weight:bold;left:827.9px;transform:scaleX(1.061);transform-origin:0 0;">Sommaire des totaux</div>
<div class="a" style="left:960px;top:456px;width:289px;height:1.2px;background:#7a7a7a;"></div>
<div class="a" style="left:827.9px;top:468.1px;width:420.6px;height:138px;background:#fdfdfd;border:1.5px solid #5aa2da;"></div>
<div class="a" style="left:830.4px;top:470px;width:265.6px;height:21.3px;background:#e4e4e4;border:1px solid #d6d6d6;border-right:none;"></div>
<div class="a" style="left:1096px;top:470px;width:130.4px;height:21.3px;background:#f7f7f7;border:1px solid #d6d6d6;border-left:1.6px solid #c8c8c8;"></div>
<div class="a" style="left:1226.4px;top:470px;width:21px;height:21.3px;background:#f7f7f7;border:1px solid #d6d6d6;border-left:1.6px solid #c8c8c8;"></div>
<div class="a" style="left:834px;top:492.7px;width:392.4px;height:27.8px;background:#e4e4e4;"></div>
<div class="a" style="left:830px;top:520.7px;width:417px;height:1px;background:#eeeeee;"></div>
<div class="a" style="left:830px;top:549.6px;width:417px;height:1px;background:#eeeeee;"></div>
<div class="a" style="left:830px;top:578.8px;width:417px;height:1px;background:#eeeeee;"></div>
<div class="a" style="left:1095.8px;top:491.3px;width:1px;height:114px;background:#eeeeee;"></div>
<div class="a" style="left:1226.1px;top:491.3px;width:1px;height:114px;background:#eeeeee;"></div>
<div class="t" style="top:475.35px;font-size:12.4px;line-height:15.5px;color:#333;left:834.8px;">Onglet</div>
<div class="t" style="top:475.35px;font-size:12.4px;line-height:15.5px;color:#333;left:1141.9px;width:80px;text-align:right;">Montant</div>
<div class="t" style="top:500.54px;font-size:12px;line-height:15.0px;color:#333;left:836.7px;">Remplacements facturés</div>
<div class="t" style="top:500.54px;font-size:12px;line-height:15.0px;color:#333;left:1140.7px;width:80px;text-align:right;">270.20 $</div>
<div class="t" style="top:529.54px;font-size:12px;line-height:15.0px;color:#333;left:836.7px;">Postes facturés</div>
<div class="t" style="top:529.54px;font-size:12px;line-height:15.0px;color:#333;left:1140.7px;width:80px;text-align:right;">0.00 $</div>
<div class="t" style="top:558.94px;font-size:12px;line-height:15.0px;color:#333;left:836.7px;">Autres éléments facturés</div>
<div class="t" style="top:558.94px;font-size:12px;line-height:15.0px;color:#333;left:1140.7px;width:80px;text-align:right;">37.41 $</div>
<div class="a" style="left:1097px;top:607.5px;width:130px;height:20.7px;background:#b2b2b2;border:1px solid #9c9c9c;border-radius:1.5px;"></div>
<div class="a" style="left:1099px;top:610.3px;width:126px;height:15.299999999999999px;background:#f0f0f0;border:1px solid #fcfcfc;"></div>
<div class="t" style="top:610.53px;font-size:11.6px;line-height:14.5px;color:#a0a0a0;left:1143px;width:80px;text-align:right;">307.61 $</div>
<div class="t" style="top:633.44px;font-size:12px;line-height:15.0px;color:#555;font-weight:bold;left:828.4px;transform:scaleX(1.088);transform-origin:0 0;">Totaux de la facture</div>
<div class="a" style="left:954px;top:638.5px;width:295px;height:1.2px;background:#7a7a7a;"></div>
<div class="a" style="left:828.4px;top:648.5px;width:420px;height:138.1px;background:#fdfdfd;border:1.5px solid #5aa2da;"></div>
<div class="a" style="left:830.3px;top:650.4px;width:396px;height:21.6px;background:#f7f7f7;border:1px solid #d6d6d6;"></div>
<div class="a" style="left:1096px;top:650.4px;width:1.6px;height:21.6px;background:#c8c8c8;"></div>
<div class="a" style="left:1226.4px;top:650.4px;width:21px;height:135px;background:#f0f0f0;"></div>
<div class="a" style="left:830px;top:701.0px;width:396.4px;height:1px;background:#eeeeee;"></div>
<div class="a" style="left:830px;top:730.4px;width:396.4px;height:1px;background:#eeeeee;"></div>
<div class="a" style="left:830px;top:759.3px;width:396.4px;height:1px;background:#eeeeee;"></div>
<div class="a" style="left:1095.8px;top:672px;width:1px;height:113px;background:#eeeeee;"></div>
<div class="t" style="top:655.55px;font-size:12.4px;line-height:15.5px;color:#333;left:834.5px;">Description</div>
<div class="t" style="top:655.55px;font-size:12.4px;line-height:15.5px;color:#333;left:1141.9px;width:80px;text-align:right;">Montant</div>
<div class="t" style="top:680.94px;font-size:12px;line-height:15.0px;color:#333;letter-spacing:-0.35px;left:836.6px;">SOUS-TOTAL TAXABLE</div>
<div class="t" style="top:680.94px;font-size:12px;line-height:15.0px;color:#333;left:1140.7px;width:80px;text-align:right;">307.61 $</div>
<div class="t" style="top:710.14px;font-size:12px;line-height:15.0px;color:#333;left:836.6px;">Taxe fédérale (5.00%)</div>
<div class="t" style="top:710.14px;font-size:12px;line-height:15.0px;color:#333;left:1140.7px;width:80px;text-align:right;">15.38 $</div>
<div class="t" style="top:739.44px;font-size:12px;line-height:15.0px;color:#333;left:836.6px;">Taxe provinciale (9.98%)</div>
<div class="t" style="top:739.44px;font-size:12px;line-height:15.0px;color:#333;left:1140.7px;width:80px;text-align:right;">30.70 $</div>
<svg class="a" style="left:1228px;top:652px;" width="20" height="134" viewBox="1228 652 20 134"><path d="M1231.8,662.6 H1242.4 L1237.1,657.5 Z" fill="#606060"/><path d="M1231.8,772.8 H1242.4 L1237.1,778.4 Z" fill="#606060"/><rect x="1232.5" y="693.7" width="9.1" height="71.3" rx="4.5" fill="#cdcdcd"/></svg>
<div class="a" style="left:1097px;top:789px;width:130px;height:19.5px;background:#b2b2b2;border:1px solid #9c9c9c;border-radius:1.5px;"></div>
<div class="a" style="left:1099px;top:791.8px;width:126px;height:14.1px;background:#f0f0f0;border:1px solid #fcfcfc;"></div>
<div class="t" style="top:791.33px;font-size:11.6px;line-height:14.5px;color:#a0a0a0;left:1143px;width:80px;text-align:right;">353.69 $</div>
<div class="a" style="left:0px;top:848.6px;width:1263px;height:1.4px;background:#2a62c8;"></div>
<div class="a" style="left:30px;top:128.75px;width:54px;height:54px;background:#3e90b4;border:3.1px solid #1c3d5c;border-radius:50%;"></div>
<div class="t" style="top:137.06px;font-size:32px;line-height:40.0px;color:#ffffff;font-weight:bold;left:37.0px;width:40px;text-align:center;">4</div>
<div class="a" style="left:421.4px;top:426.05px;width:54px;height:54px;background:#3e90b4;border:3.1px solid #1c3d5c;border-radius:50%;"></div>
<div class="t" style="top:434.36px;font-size:32px;line-height:40.0px;color:#ffffff;font-weight:bold;left:428.4px;width:40px;text-align:center;">2</div>
<div class="a" style="left:187.5px;top:526.6px;width:54px;height:54px;background:#3e90b4;border:3.1px solid #1c3d5c;border-radius:50%;"></div>
<div class="t" style="top:534.91px;font-size:32px;line-height:40.0px;color:#ffffff;font-weight:bold;left:194.5px;width:40px;text-align:center;">3</div>
<div class="a" style="left:1075px;top:538.5px;width:54px;height:54px;background:#3e90b4;border:3.1px solid #1c3d5c;border-radius:50%;"></div>
<div class="t" style="top:546.81px;font-size:32px;line-height:40.0px;color:#ffffff;font-weight:bold;left:1082.0px;width:40px;text-align:center;">5</div>
<div class="a" style="left:0px;top:37px;width:1.2px;height:813px;background:#0b4fc8;"></div>
<div class="a" style="left:1.2px;top:37px;width:1.5px;height:813px;background:#fbf8f4;opacity:0.6"></div>
<div class="a" style="left:1261.8px;top:37px;width:1.2px;height:813px;background:#1f5fd0;"></div>
</body></html>
